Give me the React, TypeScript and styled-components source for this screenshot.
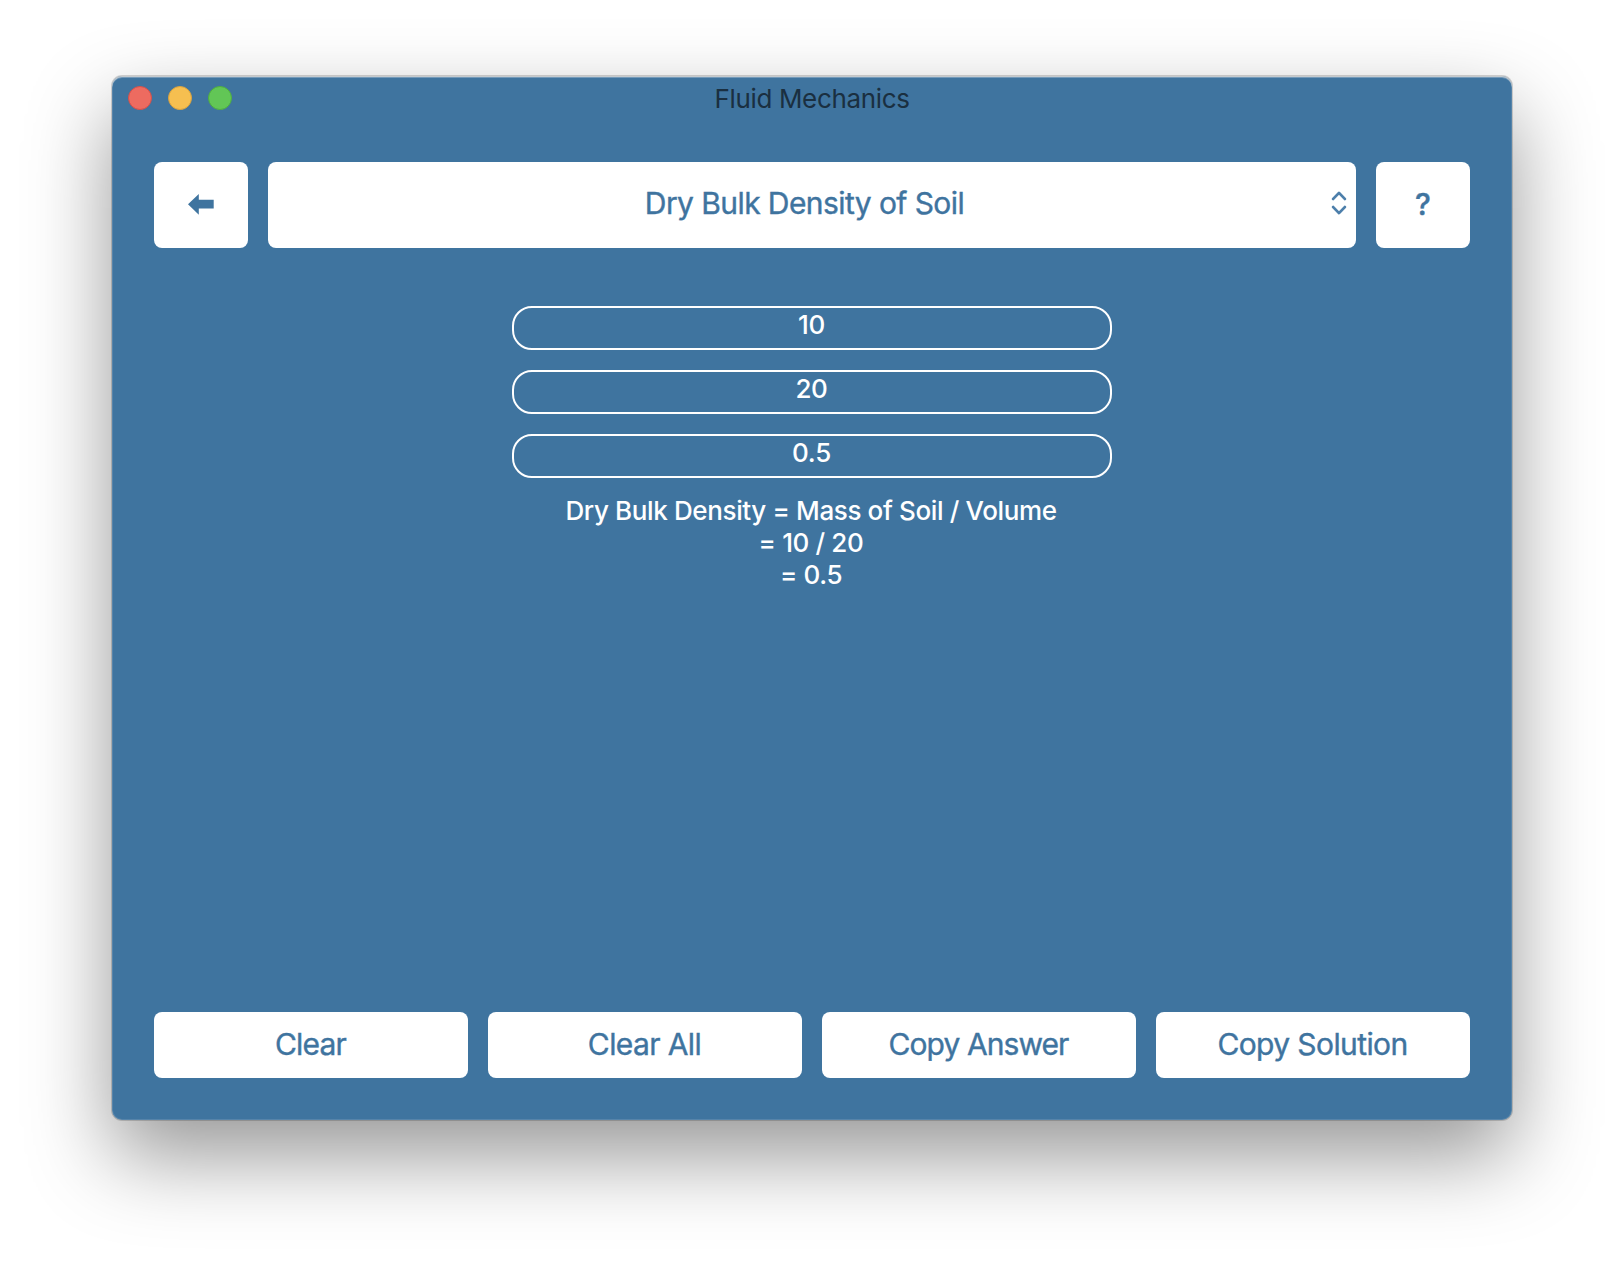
import React from "react";
import styled, { createGlobalStyle } from "styled-components";

const blue = "#3f749f";

const GlobalStyle = createGlobalStyle`
  *, *::before, *::after { box-sizing: border-box; }
  body {
    margin: 0;
    background: #ffffff;
    font-family: Inter, "Liberation Sans", sans-serif;
  }
`;

const Desktop = styled.div`
  display: flex;
  justify-content: center;
  width: 1624px;
  height: 1268px;
  padding-top: 76px;
  overflow: hidden;
`;

const Window = styled.main`
  display: flex;
  flex-direction: column;
  width: 1400px;
  height: 1044px;
  border-radius: 10px;
  background: ${blue};
  box-shadow:
    inset 0 1px 0 rgba(208, 208, 208, 0.85),
    inset 0 2px 0 rgba(255, 255, 255, 0.28),
    inset 0 0 0 1px rgba(255, 255, 255, 0.12),
    0 0 0 1px rgba(0, 0, 0, 0.16),
    0 36px 84px rgba(0, 0, 0, 0.41);
`;

const TitleBar = styled.header`
  display: grid;
  grid-template-columns: 1fr auto 1fr;
  align-items: center;
  height: 44px;
  padding: 0 16px;
`;

const Lights = styled.div`
  display: flex;
  gap: 16px;
`;

const Light = styled.span<{ $fill: string; $rim: string }>`
  width: 24px;
  height: 24px;
  border: 1px solid ${(p) => p.$rim};
  border-radius: 50%;
  background: ${(p) => p.$fill};
`;

const Title = styled.h1`
  margin: 0;
  padding-top: 2px;
  color: #1a2f40;
  font-size: 26px;
  font-weight: 400;
  line-height: 42px;
  letter-spacing: -0.34px;
`;

const Content = styled.div`
  display: flex;
  flex: 1;
  flex-direction: column;
  padding: 42px;
`;

const Toolbar = styled.nav`
  display: flex;
  gap: 20px;
  height: 86px;
`;

const Button = styled.button<{ $tracking?: number }>`
  display: flex;
  flex: 1;
  align-items: center;
  justify-content: center;
  padding: 0 1px 2px 0;
  border: 0;
  border-radius: 8px;
  background: #ffffff;
  color: ${blue};
  font-family: inherit;
  font-size: 30px;
  font-weight: 400;
  line-height: 36px;
  letter-spacing: ${(p) => p.$tracking ?? 0}px;
  -webkit-text-stroke: 0.4px ${blue};
`;

const SquareButton = styled(Button)`
  flex: 0 0 94px;
  padding-right: 0;
  font-weight: 500;
`;

const Select = styled(Button)`
  padding: 0 9px 4px 0;
`;

const SelectLabel = styled.span`
  flex: 1;
  padding-left: 10px;
  text-align: center;
`;

const Form = styled.section`
  display: flex;
  flex: 1;
  flex-direction: column;
  align-items: center;
  gap: 20px;
  padding-top: 58px;
`;

const Field = styled.input`
  width: 600px;
  height: 44px;
  padding: 0 1px 8px 0;
  border: 2px solid #ffffff;
  border-radius: 20px;
  outline: 0;
  background: transparent;
  color: #ffffff;
  font-family: inherit;
  font-size: 26px;
  font-weight: 500;
  letter-spacing: -0.3px;
  text-align: center;
`;

const Solution = styled.p`
  margin: -3px 2px 0 0;
  color: #ffffff;
  font-size: 26px;
  font-weight: 500;
  line-height: 32px;
  letter-spacing: -0.37px;
  text-align: center;
  white-space: pre-line;
`;

const Actions = styled.footer`
  display: flex;
  gap: 20px;
  height: 66px;
`;

const lights = [
  { fill: "#ed6b60", rim: "#d5504a" },
  { fill: "#f6bf50", rim: "#d9a23f" },
  { fill: "#62c656", rim: "#4fae40" },
];

const actions = [
  { label: "Clear", tracking: -0.8 },
  { label: "Clear All", tracking: -0.6 },
  { label: "Copy Answer", tracking: -0.92 },
  { label: "Copy Solution", tracking: -0.6 },
];

const solution = `Dry Bulk Density = Mass of Soil / Volume
= 10 / 20
= 0.5`;

function BackArrow() {
  return (
    <svg width="26" height="24" viewBox="0 0 26 24" fill={blue} aria-hidden="true">
      <path d="M0 12.3 10.8 2V7.8H25.7V16.6H10.8V22.8Z" />
    </svg>
  );
}

function UpDownChevrons() {
  return (
    <svg width="16" height="24" viewBox="0 0 16 24" fill="none" stroke="#4d7fab" strokeWidth="2.8" strokeLinecap="round" strokeLinejoin="round" aria-hidden="true">
      <path d="M2.2 7.9 8 1.9l5.8 6M2.2 16.1l5.8 6 5.8-6" />
    </svg>
  );
}

export default function App() {
  return (
    <Desktop>
      <GlobalStyle />
      <Window>
        <TitleBar>
          <Lights>
            {lights.map((l) => (
              <Light key={l.fill} $fill={l.fill} $rim={l.rim} />
            ))}
          </Lights>
          <Title>Fluid Mechanics</Title>
        </TitleBar>
        <Content>
          <Toolbar>
            <SquareButton aria-label="Back">
              <BackArrow />
            </SquareButton>
            <Select $tracking={-0.58}>
              <SelectLabel>Dry Bulk Density of Soil</SelectLabel>
              <UpDownChevrons />
            </Select>
            <SquareButton>?</SquareButton>
          </Toolbar>
          <Form>
            <Field aria-label="Mass of soil" defaultValue="10" />
            <Field aria-label="Volume" defaultValue="20" />
            <Field aria-label="Dry bulk density" defaultValue="0.5" readOnly />
            <Solution>{solution}</Solution>
          </Form>
          <Actions>
            {actions.map((a) => (
              <Button key={a.label} $tracking={a.tracking}>
                {a.label}
              </Button>
            ))}
          </Actions>
        </Content>
      </Window>
    </Desktop>
  );
}
